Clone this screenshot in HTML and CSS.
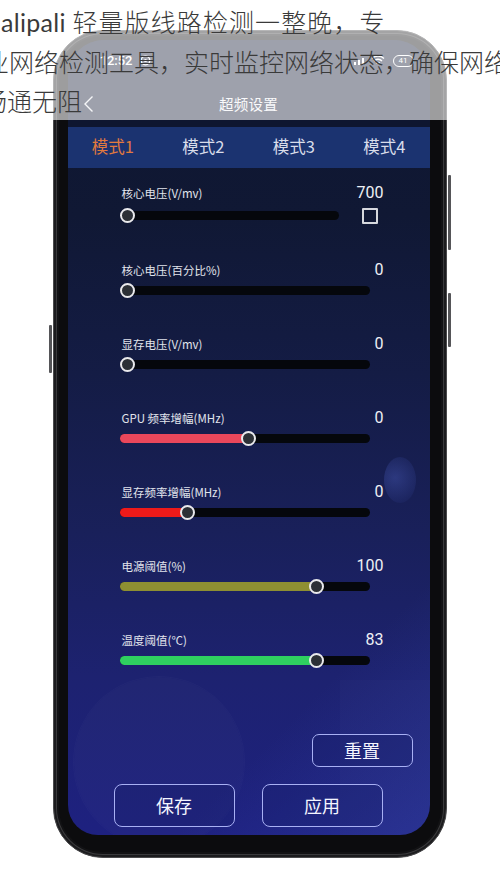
FILE: index.html
```html
<!DOCTYPE html>
<html lang="zh-CN">
<head>
<meta charset="utf-8">
<title>超频设置</title>
<link rel="stylesheet" href="styles.css">
</head>
<body>
<div class="stage">
  <div class="phone">
    <span class="side-btn btn-left"></span>
    <span class="side-btn btn-right-1"></span>
    <span class="side-btn btn-right-2"></span>
    <div class="screen">
      <span class="deco deco-moon"></span>
      <span class="deco deco-ring"></span>
      <span class="deco deco-glow"></span>
      <div class="statusbar">
        <div class="status-left">
          <span class="time">12:52</span>
          <svg class="status-ico" width="11" height="11" viewBox="0 0 11 11"><circle cx="5.5" cy="5.5" r="4.3" fill="none" stroke="#fff" stroke-width="1.3"/><circle cx="5.5" cy="5.5" r="1.6" fill="#fff"/></svg>
        </div>
        <div class="status-right">
          <svg width="14" height="11" viewBox="0 0 14 11"><path d="M1 10h2V7H1zM5 10h2V5H5zM9 10h2V3H9z" fill="#fff"/></svg>
          <svg width="14" height="11" viewBox="0 0 14 11"><path d="M1 3.5a8.5 8.5 0 0 1 12 0M3 6a5.5 5.5 0 0 1 8 0M5.2 8.3a2.4 2.4 0 0 1 3.6 0" fill="none" stroke="#fff" stroke-width="1.3"/></svg>
          <span class="battery">41</span>
        </div>
      </div>
      <div class="titlebar">
        <svg class="back" width="11" height="18" viewBox="0 0 11 18"><polyline points="9.5,1.5 2,9 9.5,16.5" fill="none" stroke="#e8e8ee" stroke-width="1.4"/></svg>
        <span class="title">超频设置</span>
      </div>
      <nav class="tabs">
        <span class="tab active">模式1</span>
        <span class="tab">模式2</span>
        <span class="tab">模式3</span>
        <span class="tab">模式4</span>
      </nav>
      <div class="settings">
        <div class="row row-first">
          <div class="row-head"><span class="label">核心电压(V/mv)</span><span class="value">700</span></div>
          <div class="row-slider">
            <div class="track track-short" style="--pos:7.5px"><span class="thumb"></span></div>
            <span class="checkbox"></span>
          </div>
        </div>
        <div class="row">
          <div class="row-head"><span class="label">核心电压(百分比%)</span><span class="value">0</span></div>
          <div class="row-slider"><div class="track" style="--pos:7.5px"><span class="thumb"></span></div></div>
        </div>
        <div class="row">
          <div class="row-head"><span class="label">显存电压(V/mv)</span><span class="value">0</span></div>
          <div class="row-slider"><div class="track" style="--pos:7.5px"><span class="thumb"></span></div></div>
        </div>
        <div class="row">
          <div class="row-head"><span class="label">GPU 频率增幅(MHz)</span><span class="value">0</span></div>
          <div class="row-slider"><div class="track" style="--pos:129px"><span class="fill fill-pink"></span><span class="thumb"></span></div></div>
        </div>
        <div class="row">
          <div class="row-head"><span class="label">显存频率增幅(MHz)</span><span class="value">0</span></div>
          <div class="row-slider"><div class="track" style="--pos:68px"><span class="fill fill-red"></span><span class="thumb"></span></div></div>
        </div>
        <div class="row">
          <div class="row-head"><span class="label">电源阈值(%)</span><span class="value">100</span></div>
          <div class="row-slider"><div class="track" style="--pos:197px"><span class="fill fill-olive"></span><span class="thumb"></span></div></div>
        </div>
        <div class="row">
          <div class="row-head"><span class="label">温度阈值(℃)</span><span class="value">83</span></div>
          <div class="row-slider"><div class="track" style="--pos:197px"><span class="fill fill-green"></span><span class="thumb"></span></div></div>
        </div>
      </div>
      <div class="actions">
        <div class="reset-line"><button class="btn btn-reset">重置</button></div>
        <div class="main-line">
          <button class="btn btn-main">保存</button>
          <button class="btn btn-main">应用</button>
        </div>
      </div>
    </div>
  </div>
  <div class="caption">
    <p class="cap-line cap-1"><span class="latin">alipali</span> 轻量版线路检测一整晚，专</p>
    <p class="cap-line cap-2">业网络检测工具，实时监控网络状态，确保网络</p>
    <p class="cap-line cap-3">畅通无阻</p>
  </div>
</div>
</body>
</html>
```

FILE: styles.css
```css
* { box-sizing: border-box; }
html, body { margin: 0; padding: 0; background: #ffffff; }
body {
  width: 500px;
  height: 889px;
  overflow: hidden;
  font-family: "Noto Sans CJK SC", "Noto Sans", sans-serif;
}
.stage {
  position: relative;
  width: 500px;
  height: 889px;
  padding-top: 30px;
}

/* phone body */
.phone {
  position: relative;
  margin-left: 53px;
  width: 394px;
  height: 828px;
  border: 1.5px solid #4a4a4c;
  border-radius: 50px;
  background: #0c0c0e;
  box-shadow: inset 0 0 0 2px #1c1c1e, inset 0 0 0 3px #3a3a3c, inset 0 0 0 5px #121214;
  padding: 8.5px 15.5px 21.5px 13.5px;
}
.side-btn {
  position: absolute;
  width: 3px;
  background: #555558;
  border-radius: 1px;
}
.btn-left { left: -5px; top: 294px; height: 48px; }
.btn-right-1 { right: -5px; top: 144px; height: 75px; }
.btn-right-2 { right: -5px; top: 262px; height: 54px; }

/* screen */
.screen {
  position: relative;
  width: 362px;
  height: 795px;
  border-radius: 36px 36px 30px 30px;
  overflow: hidden;
  display: flex;
  flex-direction: column;
  background:
    linear-gradient(135deg, rgba(0,0,0,0) 78%, rgba(70,100,210,0.22) 100%),
    linear-gradient(180deg, #0e1630 0%, #101834 22%, #141c45 42%, #19205a 62%, #1d2270 80%, #1e2180 100%);
}
.deco { position: absolute; pointer-events: none; }
.deco-moon {
  left: 316px; top: 417px;
  width: 32px; height: 46px;
  border-radius: 50%;
  background: radial-gradient(circle at 35% 45%, rgba(70,88,180,0.45), rgba(50,66,150,0.2) 70%, rgba(0,0,0,0) 100%);
}
.deco-ring {
  left: 6px; top: 637px;
  width: 170px; height: 170px;
  border-radius: 50%;
  background: rgba(255,255,255,0.02);
  box-shadow: 0 0 0 1px rgba(255,255,255,0.025);
}
.deco-glow {
  left: 272px; top: 640px;
  width: 120px; height: 160px;
  background: rgba(255,255,255,0.015);
}

.statusbar {
  height: 38px;
  flex: none;
  display: flex;
  align-items: center;
  justify-content: space-between;
  padding: 4px 16px 0 32px;
  background: #0e1630;
  color: #fff;
  position: relative;
}
.status-left, .status-right { display: flex; align-items: center; gap: 8px; }
.status-right { gap: 4px; }
.time { font-family: "Roboto", "Noto Sans", sans-serif; font-weight: 500; font-size: 13px; }
.battery {
  display: inline-flex; align-items: center; justify-content: center;
  width: 21px; height: 12px;
  border: 1.2px solid #fff; border-radius: 6px;
  font-family: "Roboto", sans-serif; font-size: 8px; line-height: 1;
  margin-left: 4px;
}

.titlebar {
  height: 49px;
  flex: none;
  position: relative;
  display: flex;
  align-items: center;
  justify-content: center;
  background: #0e1630;
  padding-top: 2px;
}
.back { position: absolute; left: 15px; top: 17px; }
.title { color: #f2f3f6; font-size: 14.5px; letter-spacing: 0.2px; }

.tabs {
  height: 41px;
  flex: none;
  display: grid;
  grid-template-columns: repeat(4, 1fr);
  align-items: center;
  background: #1b3370;
  position: relative;
}
.tab {
  text-align: center;
  font-size: 16.5px;
  color: #d9ddea;
  line-height: 1;
  padding-bottom: 1px;
}
.tab.active { color: #e27a3e; }

/* settings */
.settings {
  padding: 17px 46px 0 52px;
  position: relative;
}
.row { margin-bottom: 34px; }
.row-first { margin-bottom: 33px; }
.row:last-child { margin-bottom: 0; }
.row-head {
  height: 18px;
  display: flex;
  align-items: center;
  justify-content: space-between;
  padding-left: 2px;
}
.label { font-size: 11.5px; color: #e1e4ec; line-height: 1; }
.value {
  font-family: "Roboto", "Noto Sans", sans-serif;
  font-size: 16px;
  color: #eef0f5;
  line-height: 1;
  position: relative;
  top: -1px;
}
.row-slider {
  height: 22px;
  display: flex;
  align-items: center;
}
.row-first .row-slider { height: 26px; }
.track {
  position: relative;
  width: 250px;
  height: 9px;
  border-radius: 5px;
  background: #05070c;
}
.track-short { width: 219px; }
.fill {
  position: absolute;
  left: 0; top: 0;
  height: 9px;
  width: var(--pos);
  border-radius: 5px 0 0 5px;
}
.fill-pink { background: #e9475b; }
.fill-red { background: #ee1a1a; }
.fill-olive { background: #8e8f32; }
.fill-green { background: #2fd060; }
.thumb {
  position: absolute;
  top: 50%;
  left: calc(var(--pos) - 7.5px);
  width: 15px;
  height: 15px;
  margin-top: -7.5px;
  border-radius: 50%;
  background: #2c3036;
  border: 2.5px solid #e9e9ec;
}
.checkbox {
  width: 16px;
  height: 16px;
  margin-left: 23px;
  border: 2px solid #d6d8de;
  border-radius: 1px;
}

/* action buttons */
.actions {
  padding-top: 62px;
  position: relative;
}
.reset-line {
  display: flex;
  justify-content: flex-end;
  padding-right: 17px;
}
.main-line {
  display: flex;
  gap: 27px;
  padding-left: 46px;
  margin-top: 17px;
}
.btn {
  font-family: "Noto Sans CJK SC", sans-serif;
  background: rgba(20,26,100,0.25);
  color: #f4f5ff;
  border: 1.5px solid #a8b0f4;
  border-radius: 8px;
  font-size: 18px;
  line-height: 1;
  padding: 0;
  display: flex;
  align-items: center;
  justify-content: center;
}
.btn-reset { width: 101px; height: 33px; border-radius: 7px; }
.btn-main { width: 121px; height: 43px; }

/* caption overlay */
.caption {
  position: absolute;
  left: 0; top: 0;
  width: 500px;
  height: 120px;
  overflow: hidden;
  background: rgba(255,255,255,0.6);
  padding-top: 2px;
}
.cap-line {
  margin: 0;
  white-space: nowrap;
  font-size: 25px;
  line-height: 39px;
  color: #3a3a3a;
  font-weight: 300;
}
.latin { font-family: "Lato", "Noto Sans", sans-serif; font-weight: 400; letter-spacing: 0.3px; }
.cap-1 { margin-left: 1px; letter-spacing: 1.1px; }
.cap-2 { margin-left: -16px; }
.cap-3 { margin-left: -18px; }
```
